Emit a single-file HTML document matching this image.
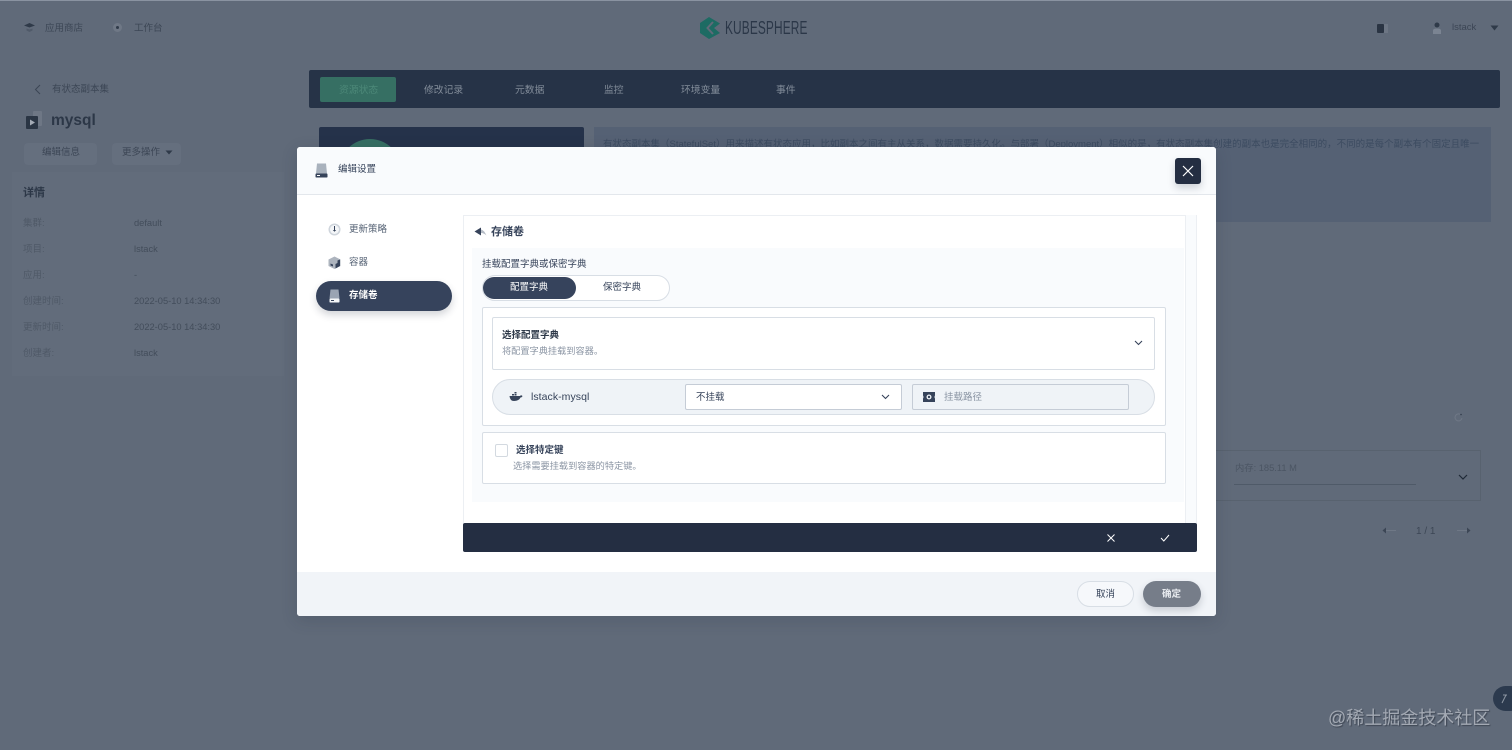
<!DOCTYPE html>
<html lang="zh">
<head>
<meta charset="utf-8">
<title>编辑设置</title>
<style>
html,body{margin:0;padding:0;width:1512px;height:750px;overflow:hidden;background:#606a79}
body{position:relative;font-family:"Liberation Sans","Noto Sans CJK SC",sans-serif;font-size:9.5px;color:#2d3848;filter:blur(.3px)}
.a{position:absolute;white-space:nowrap;line-height:1.2}
.box{position:absolute;box-sizing:border-box}
.d{color:#3c4655}
.l{color:#4f5967}
.v{color:#434d5b;font-size:9.3px}
svg{position:absolute;overflow:visible}
</style>
</head>
<body>
<!-- background page -->
<div class="box" style="left:0;top:0;width:1512px;height:1px;background:#8a93a1"></div>
<div class="box" style="left:12px;top:172px;width:272px;height:204px;background:#626c7b"></div>

<svg style="left:23px;top:22px" width="13" height="11" viewBox="0 0 13 11"><path d="M1 3.500L6.500 1 12 3.500 6.500 5.500z" fill="#2f3a49"/><path d="M3.500 6.500l3 1 3-1V8.500l-3 1.500-3-1.500z" fill="#505a69"/></svg>
<div class="a d" style="left:45px;top:23px">应用商店</div>
<svg style="left:112px;top:22px" width="11" height="11" viewBox="0 0 11 11"><circle cx="5.500" cy="5.500" r="4.500" fill="#6f7886"/><circle cx="5.500" cy="5.500" r="1.500" fill="#2f3a49"/></svg>
<div class="a d" style="left:134px;top:23px">工作台</div>

<svg style="left:699px;top:16px" width="22" height="24" viewBox="0 0 22 24"><path d="M10 1L21 7.500 15 12 21 17 10 23 1 17V7z" fill="#1d6b63"/><path d="M14 6L8.500 12 14 18" fill="none" stroke="#606a79" stroke-width="2"/></svg>
<div class="a" style="left:725px;top:18px;font-size:18px;color:#2b3748;transform:scaleX(.66);transform-origin:left top;letter-spacing:.2px">KUBESPHERE</div>

<div class="box" style="left:1377px;top:24px;width:7px;height:9px;background:#2a3443;border-radius:1px"></div>
<div class="box" style="left:1384px;top:24px;width:4px;height:9px;background:#6d7684"></div>
<svg style="left:1432px;top:22px" width="10" height="12" viewBox="0 0 10 12"><circle cx="5" cy="3" r="2.500" fill="#2f3a49"/><path d="M1 12V8.500Q1 6.500 5 6.500T9 8.500V12z" fill="#7b8492"/></svg>
<div class="a d" style="left:1452px;top:22px;font-size:9.500px">lstack</div>
<svg style="left:1490px;top:25px" width="9" height="6" viewBox="0 0 9 6"><path d="M0.500 0.500H8.500L4.500 5.500z" fill="#2f3a49"/></svg>

<svg style="left:34px;top:84px" width="7" height="11" viewBox="0 0 7 11"><path d="M6 1L1.500 5.500 6 10" fill="none" stroke="#3c4655" stroke-width="1"/></svg>
<div class="a d" style="left:52px;top:84px">有状态副本集</div>
<svg style="left:25px;top:111px" width="18" height="18" viewBox="0 0 18 18"><rect x="8" y="0" width="9" height="15" rx="1" fill="#6e7785"/><rect x="1" y="5" width="12" height="13" rx="1" fill="#2a3544"/><path d="M5 8.500L10 11.500 5 14.500z" fill="#a4abb6"/></svg>
<div class="a" style="left:51px;top:112px;font-size:15.500px;font-weight:bold;color:#2c3747">mysql</div>

<div class="box" style="left:24px;top:143px;width:73px;height:22px;background:#656f7e;border-radius:4px"></div>
<div class="a d" style="left:42px;top:147px">编辑信息</div>
<div class="box" style="left:112px;top:143px;width:69px;height:22px;background:#656f7e;border-radius:4px"></div>
<div class="a d" style="left:122px;top:147px">更多操作</div>
<svg style="left:165px;top:150px" width="8" height="5" viewBox="0 0 8 5"><path d="M0.500 0.500H7.500L4 4.500z" fill="#2f3a49"/></svg>

<div class="a" style="left:23px;top:187px;font-size:11px;font-weight:bold;color:#2c3747">详情</div>
<div class="a l" style="left:23px;top:218px">集群:</div><div class="a v" style="left:134px;top:218px">default</div>
<div class="a l" style="left:23px;top:244px">项目:</div><div class="a v" style="left:134px;top:244px">lstack</div>
<div class="a l" style="left:23px;top:270px">应用:</div><div class="a v" style="left:134px;top:270px">-</div>
<div class="a l" style="left:23px;top:296px">创建时间:</div><div class="a v" style="left:134px;top:296px">2022-05-10 14:34:30</div>
<div class="a l" style="left:23px;top:322px">更新时间:</div><div class="a v" style="left:134px;top:322px">2022-05-10 14:34:30</div>
<div class="a l" style="left:23px;top:348px">创建者:</div><div class="a v" style="left:134px;top:348px">lstack</div>

<!-- tab bar -->
<div class="box" style="left:309px;top:70px;width:1191px;height:38px;background:#263347;border-radius:2px"></div>
<div class="box" style="left:320px;top:77px;width:76px;height:25px;background:#366f63;border-radius:2px"></div>
<div class="a" style="left:339px;top:85px;font-size:9.800px;color:#4c8878">资源状态</div>
<div class="a" style="left:424px;top:85px;font-size:9.800px;color:#838d9a">修改记录</div>
<div class="a" style="left:515px;top:85px;font-size:9.800px;color:#838d9a">元数据</div>
<div class="a" style="left:604px;top:85px;font-size:9.800px;color:#838d9a">监控</div>
<div class="a" style="left:681px;top:85px;font-size:9.800px;color:#838d9a">环境变量</div>
<div class="a" style="left:776px;top:85px;font-size:9.800px;color:#838d9a">事件</div>

<div class="box" style="left:319px;top:127px;width:265px;height:30px;background:#25324a;border-radius:2px 2px 0 0;overflow:hidden"><div class="box" style="left:20px;top:12px;width:62px;height:62px;border-radius:50%;background:#366f63"></div></div>
<div class="box" style="left:594px;top:127px;width:897px;height:95px;background:#556174"></div>
<div class="a" style="left:603px;top:139px;font-size:9.500px;color:#3c4b60">有状态副本集（StatefulSet）用来描述有状态应用，比如副本之间有主从关系，数据需要持久化。与部署（Deployment）相似的是，有状态副本集创建的副本也是完全相同的，不同的是每个副本有个固定且唯一</div>

<!-- background right remnants -->
<svg style="left:1454px;top:413px" width="9" height="9" viewBox="0 0 9 9"><path d="M6.500 1.500A3.500 3.500 0 1 0 8 5" fill="none" stroke="#6f7886" stroke-width="1"/><circle cx="7" cy="1.500" r=".8" fill="#2f3a49"/></svg>
<div class="box" style="left:1210px;top:450px;width:271px;height:51px;border:1px solid #58626f;border-left:none"></div>
<div class="a" style="left:1235px;top:463px;font-size:9.300px;color:#4b5563">内存: 185.11 M</div>
<div class="box" style="left:1234px;top:484px;width:182px;height:1px;background:#4f5a68"></div>
<svg style="left:1458px;top:474px" width="10" height="6" viewBox="0 0 10 6"><path d="M1 1L5 5 9 1" fill="none" stroke="#1f2937" stroke-width="1.200"/></svg>
<svg style="left:1382px;top:527px" width="16" height="7" viewBox="0 0 16 7"><path d="M4 .5L.5 3.500 4 6.500z" fill="#3c4655"/><path d="M4 3.500H14" stroke="#6f7886"/></svg>
<div class="a" style="left:1416px;top:526px;font-size:10px;color:#3c4655">1 / 1</div>
<svg style="left:1455px;top:527px" width="16" height="7" viewBox="0 0 16 7"><path d="M2 3.500H12" stroke="#6f7886"/><path d="M12 .5L15.500 3.500 12 6.500z" fill="#3c4655"/></svg>

<div class="box" style="left:1493px;top:686px;width:30px;height:25px;border-radius:13px;background:#2c3a4e"></div>
<svg style="left:1500px;top:693px" width="9" height="11" viewBox="0 0 9 11"><path d="M2 10L6 2M3 2H7" fill="none" stroke="#8d96a3" stroke-width="1"/></svg>
<div class="a" style="left:1328px;top:708px;font-size:18px;color:#a3a9b3;text-shadow:1px 1px 1px #3d4552;z-index:20">@稀土掘金技术社区</div>

<!-- modal -->
<div class="box" style="left:297px;top:147px;width:919px;height:469px;background:#fff;border-radius:3px;box-shadow:0 4px 16px rgba(35,45,65,.2);overflow:hidden">
  <div class="box" style="left:0;top:0;width:919px;height:47px;background:#f9fbfd"></div>
  <div class="box" style="left:0;top:47px;width:919px;height:1px;background:#e3e7ec"></div>
  <div class="box" style="left:0;top:425px;width:919px;height:44px;background:#f1f4f8"></div>
</div>
<svg style="left:315px;top:163px" width="13" height="15" viewBox="0 0 13 15"><path d="M2 0.500H11L12 10.500H1z" fill="#a9b2bd"/><rect x="0.500" y="10.500" width="12" height="4" rx=".8" fill="#36435a"/><rect x="2" y="12" width="3" height="1" fill="#fff"/></svg>
<div class="a" style="left:338px;top:164px;font-size:9.500px;color:#36435a">编辑设置</div>

<div class="box" style="left:1175px;top:158px;width:26px;height:26px;background:#242e42;border-radius:3px;box-shadow:0 4px 8px rgba(36,46,66,.2)"></div>
<svg style="left:1182px;top:165px" width="12" height="12" viewBox="0 0 12 12"><path d="M1 1L11 11M11 1L1 11" stroke="#fff" stroke-width="1.200"/></svg>

<!-- sidebar -->
<svg style="left:328px;top:223px" width="13" height="13" viewBox="0 0 13 13"><circle cx="6.500" cy="6.500" r="6" fill="#cfd5dc"/><circle cx="6.500" cy="6.500" r="4.500" fill="#f4f6f8"/><path d="M6.500 3V7" stroke="#36435a" stroke-width="1"/><path d="M4.800 7H8.200L6.500 8.800z" fill="#36435a"/></svg>
<div class="a" style="left:349px;top:224px;font-size:9.500px;color:#566375">更新策略</div>
<svg style="left:328px;top:256px" width="13" height="13" viewBox="0 0 13 13"><path d="M6.500 .5L12.500 3.500V10L6.500 13 .5 10V3.500z" fill="#adb4be"/><path d="M12 3.500V10L7.500 12.500V8L9.500 7V4.500z" fill="#36435a"/><path d="M2.500 7.500L5 8.500V10.500L2.500 9.500z" fill="#36435a"/></svg>
<div class="a" style="left:349px;top:257px;font-size:9.500px;color:#566375">容器</div>
<div class="box" style="left:316px;top:281px;width:136px;height:30px;background:#36435c;border-radius:15px;box-shadow:0 4px 8px rgba(36,46,66,.2)"></div>
<svg style="left:329px;top:289px" width="11" height="14" viewBox="0 0 11 14"><path d="M1.500 0.500H9.500L10.500 9.500H.5z" fill="#9aa4b3"/><rect x="0.500" y="9.500" width="10" height="4" rx=".8" fill="#f4f6f8"/><rect x="2" y="11" width="3" height="1" fill="#36435c"/></svg>
<div class="a" style="left:349px;top:290px;font-size:9.500px;color:#fff;font-weight:bold">存储卷</div>

<!-- content panel -->
<div class="box" style="left:463px;top:215px;width:722px;height:340px;background:#fff;border-top:1px solid #eceff3"></div>
<div class="box" style="left:1185px;top:215px;width:12px;height:310px;background:#f9fbfd;border-left:1px solid #eceff3;border-right:1px solid #eceff3"></div>
<div class="box" style="left:463px;top:215px;width:1px;height:310px;background:#eceff3"></div>
<div class="box" style="left:472px;top:248px;width:712px;height:254px;background:#f9fbfd"></div>
<svg style="left:474px;top:227px" width="13" height="10" viewBox="0 0 13 10"><path d="M7 .5V8.500L.5 4.500z" fill="#36435a"/><path d="M7 2.500Q10 3 12.500 8.500Q10 6 7 6z" fill="#b4bbc5"/></svg>
<div class="a" style="left:491px;top:226px;font-size:11px;color:#36435a;font-weight:bold">存储卷</div>
<div class="a" style="left:482px;top:259px;font-size:9.500px;color:#36435a">挂载配置字典或保密字典</div>

<div class="box" style="left:482px;top:275px;width:188px;height:26px;background:#fff;border:1px solid #d8dee5;border-radius:13px"></div>
<div class="box" style="left:483px;top:277px;width:93px;height:22px;background:#36435c;border-radius:11px"></div>
<div class="a" style="left:510px;top:282px;font-size:9.500px;color:#fff">配置字典</div>
<div class="a" style="left:603px;top:282px;font-size:9.500px;color:#36435a">保密字典</div>

<div class="box" style="left:482px;top:307px;width:684px;height:119px;background:#fff;border:1px solid #d8dee5;border-radius:2px"></div>
<div class="box" style="left:492px;top:317px;width:663px;height:53px;background:#fff;border:1px solid #d8dee5;border-radius:2px"></div>
<div class="a" style="left:502px;top:330px;font-size:9.500px;font-weight:bold;color:#2d3848">选择配置字典</div>
<div class="a" style="left:502px;top:346px;font-size:9.200px;color:#8a94a3">将配置字典挂载到容器。</div>
<svg style="left:1134px;top:340px" width="9" height="6" viewBox="0 0 9 6"><path d="M1 1L4.500 4.500 8 1" fill="none" stroke="#36435a" stroke-width="1.100"/></svg>

<div class="box" style="left:492px;top:379px;width:663px;height:36px;background:#eff3f7;border:1px solid #d8dee5;border-radius:18px"></div>
<svg style="left:509px;top:391px" width="14" height="11" viewBox="0 0 14 11"><path d="M.5 5H11Q12 3.500 13.500 5 13 6.500 11.500 6.500 10 10 5 10 1 10 .5 5z" fill="#36435a"/><rect x="3" y="3" width="2" height="1.500" fill="#36435a"/><rect x="5.500" y="3" width="2" height="1.500" fill="#36435a"/><rect x="5.500" y="1" width="2" height="1.500" fill="#36435a"/></svg>
<div class="a" style="left:531px;top:391px;font-size:10.500px;color:#36435a;letter-spacing:.05px">lstack-mysql</div>

<div class="box" style="left:685px;top:384px;width:217px;height:26px;background:#fff;border:1px solid #c5ccd6;border-radius:2px"></div>
<div class="a" style="left:696px;top:392px;font-size:9.500px;color:#36435a">不挂载</div>
<svg style="left:881px;top:394px" width="9" height="6" viewBox="0 0 9 6"><path d="M1 1L4.500 4.500 8 1" fill="none" stroke="#36435a" stroke-width="1.100"/></svg>

<div class="box" style="left:912px;top:384px;width:217px;height:26px;background:#eff3f7;border:1px solid #c5ccd6;border-radius:2px"></div>
<svg style="left:923px;top:392px" width="12" height="10" viewBox="0 0 12 10"><path d="M0 0H12V3.500Q11 5 12 6.500V10H0V6.500Q1 5 0 3.500z" fill="#36435a"/><circle cx="6" cy="5" r="2.500" fill="#eff3f7"/><circle cx="6" cy="5" r="1.200" fill="#36435a"/></svg>
<div class="a" style="left:944px;top:392px;font-size:9.500px;color:#8a94a3">挂载路径</div>

<div class="box" style="left:482px;top:432px;width:684px;height:52px;background:#fff;border:1px solid #d8dee5;border-radius:2px"></div>
<div class="box" style="left:495px;top:444px;width:13px;height:13px;background:#fff;border:1px solid #d3d9e0;border-radius:2px"></div>
<div class="a" style="left:516px;top:445px;font-size:9.500px;color:#36435a;font-weight:bold">选择特定键</div>
<div class="a" style="left:513px;top:461px;font-size:9.200px;color:#8a94a3">选择需要挂载到容器的特定键。</div>

<div class="box" style="left:463px;top:523px;width:734px;height:29px;background:#242e42;border-radius:2px"></div>
<svg style="left:1107px;top:534px" width="8" height="8" viewBox="0 0 8 8"><path d="M.5 .5L7.500 7.500M7.500 .5L.5 7.500" stroke="#fff" stroke-width="1"/></svg>
<svg style="left:1160px;top:534px" width="10" height="8" viewBox="0 0 10 8"><path d="M1 4L3.800 7 9 1" fill="none" stroke="#fff" stroke-width="1"/></svg>

<!-- footer -->
<div class="box" style="left:1077px;top:581px;width:57px;height:26px;background:#f6f8fb;border:1px solid #d8dee5;border-radius:13px"></div>
<div class="a" style="left:1096px;top:589px;font-size:9.500px;color:#36435a">取消</div>
<div class="box" style="left:1143px;top:581px;width:58px;height:26px;background:#767d89;border-radius:13px;box-shadow:0 4px 8px rgba(36,46,66,.2)"></div>
<div class="a" style="left:1162px;top:589px;font-size:9.500px;color:#e8ebef;font-weight:bold">确定</div>
</body>
</html>
